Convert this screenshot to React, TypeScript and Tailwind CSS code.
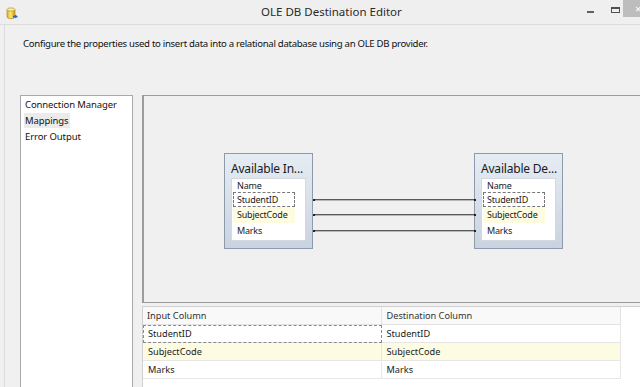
import React from 'react';

const inputCols = ['Name', 'StudentID', 'SubjectCode', 'Marks'];
const rowHeights = ['h-[13px]', 'h-[15px]', 'h-[16px]', 'h-[16px]'];

const rows = [
    { input: 'StudentID', dest: 'StudentID' },
    { input: 'SubjectCode', dest: 'SubjectCode' },
    { input: 'Marks', dest: 'Marks' },
];

function DbIcon() {
    return (
        <svg width="12" height="13" viewBox="0 0 12 13">
            <defs>
                <linearGradient id="cyl" x1="0" x2="1" y1="0" y2="0">
                    <stop offset="0" stopColor="#d9b21c" />
                    <stop offset="0.45" stopColor="#fbe77a" />
                    <stop offset="1" stopColor="#c99a12" />
                </linearGradient>
            </defs>
            <path d="M1 2.5 V10 A4 1.6 0 0 0 9 10 V2.5 Z" fill="url(#cyl)" stroke="#a88512" strokeWidth="0.6" />
            <ellipse cx="5" cy="2.5" rx="4" ry="1.6" fill="#fdf0a6" stroke="#a88512" strokeWidth="0.6" />
            <path d="M7 9.5 H10.5 L9.2 8.2 M10.5 9.5 L9.2 10.8" stroke="#2a62c9" strokeWidth="1.4" fill="none" />
        </svg>
    );
}

function ColumnBox({ title, left }: { title: string; left: number }) {
    return (
        <div
            className="absolute top-[57px] w-[89px] h-[96px] border border-[#8d9aab] bg-gradient-to-b from-[#e6ecf3] to-[#c9d3df]"
            style={{ left }}
        >
            <div className="pl-[6px] pt-[8px] text-[12px] leading-[14px] text-[#1a1a1a] tracking-[-0.2px] whitespace-nowrap">{title}</div>
            <div className="absolute left-[6px] top-[24px] w-[75px] h-[63px] bg-white border border-[#d4d9e0]">
                {inputCols.map((c, i) => (
                    <div
                        key={c}
                        className={`${rowHeights[i]} w-[62px] ml-[1px] pl-[3px] flex items-center text-[9px] text-[#1a1a1a] tracking-[-0.2px] whitespace-nowrap border ${
                            i === 1 ? 'border-dashed border-[#777]' : 'border-transparent'
                        } ${i === 2 ? 'bg-[#fdfbe0]' : ''}`}
                    >
                        {c}
                    </div>
                ))}
            </div>
        </div>
    );
}

export default function App() {
    return (
        <div className="w-[640px] h-[387px] overflow-hidden bg-[#f0f0f0] font-['Noto_Sans',sans-serif] text-[#1a1a1a]">
            {/* title bar */}
            <div className="h-[25px] flex items-center border-b border-[#dcdcdc] bg-[#efefef]">
                <div className="pl-[6px] pt-[2px]">
                    <DbIcon />
                </div>
                <div className="flex-1 pl-[243px] text-[11.5px] leading-[16px] text-[#2a2a2a] whitespace-nowrap">OLE DB Destination Editor</div>
                <div className="flex items-start h-full">
                    <div className="w-[30px] flex justify-center pt-[11px]">
                        <div className="w-[7px] h-[2px] bg-[#606060]" />
                    </div>
                    <div className="w-[20px] flex justify-center pt-[7px]">
                        <div className="w-[9px] h-[6px] border border-[#505050] border-t-2" />
                    </div>
                    <div className="w-[17px] h-[17px] bg-[#bdbdbd] ml-[-2px] text-white text-[11px] leading-[17px] pl-[12px]">×</div>
                </div>
            </div>

            <div className="ml-[4px] border-l border-[#dcdcdc] h-[362px]">
                <p className="pl-[18px] pt-[12px] text-[9.6px] leading-[14px] text-[#111] tracking-[-0.3px] whitespace-nowrap">
                    Configure the properties used to insert data into a relational database using an OLE DB provider.
                </p>

                <div className="flex mt-[44px] pl-[15px] gap-[9px]">
                    {/* page list */}
                    <div className="w-[113px] h-[300px] bg-white border border-[#a9a9a9] pt-[1px] text-[9.5px] leading-[16px] text-[#111] tracking-[-0.1px] whitespace-nowrap">
                        <div className="pl-[4px]">Connection Manager</div>
                        <div className="pl-[3px]">
                            <span className="bg-[#ebebeb] px-[1px] py-[1px]">Mappings</span>
                        </div>
                        <div className="pl-[4px]">Error Output</div>
                    </div>

                    <div className="flex-1 flex flex-col">
                        {/* diagram */}
                        <div className="relative h-[208px] border-t border-b border-l-2 border-[#9c9c9c] bg-[#f0f0f0]">
                            <ColumnBox title="Available In..." left={80} />
                            <ColumnBox title="Available De..." left={330} />
                            <svg className="absolute left-[169px] top-[99px]" width="165" height="40">
                                {[4, 19, 35].map((y) => (
                                    <g key={y}>
                                        <line x1="1" x2="163" y1={y + 0.5} y2={y + 0.5} stroke="#5a5a5a" strokeWidth="1" />
                                        <line x1="1" x2="163" y1={y + 1.5} y2={y + 1.5} stroke="#b8b8b8" strokeWidth="1" />
                                        <rect x="0" y={y} width="2" height="2" fill="#222" />
                                        <rect x="161" y={y} width="2" height="2" fill="#222" />
                                    </g>
                                ))}
                            </svg>
                        </div>

                        {/* mapping grid */}
                        <div className="mt-[3px] h-[90px] bg-white border-l border-t border-[#cfcfcf] text-[9.2px] text-[#1a1a1a]">
                            <div className="w-[478px]">
                                <div className="grid grid-cols-2 h-[18px] bg-[#f9f9f9] border-b border-[#e3e3e3] border-r">
                                    <div className="pl-[4px] leading-[18px] border-r border-[#e3e3e3] text-[#333]">Input Column</div>
                                    <div className="pl-[5px] leading-[18px] text-[#333]">Destination Column</div>
                                </div>
                                {rows.map((r, i) => (
                                    <div
                                        key={r.input}
                                        className={`grid grid-cols-2 h-[18px] border-b border-r border-[#e6e6e6] ${
                                            i === 1 ? 'bg-[#fdfbe2]' : 'bg-white'
                                        }`}
                                    >
                                        <div
                                            className={`pl-[4px] leading-[16px] border ${
                                                i === 0 ? 'border-dashed border-[#8a8a8a]' : 'border-transparent border-r-[#e6e6e6]'
                                            }`}
                                        >
                                            {r.input}
                                        </div>
                                        <div className="pl-[5px] leading-[18px]">{r.dest}</div>
                                    </div>
                                ))}
                            </div>
                        </div>
                    </div>
                </div>
            </div>
        </div>
    );
}
